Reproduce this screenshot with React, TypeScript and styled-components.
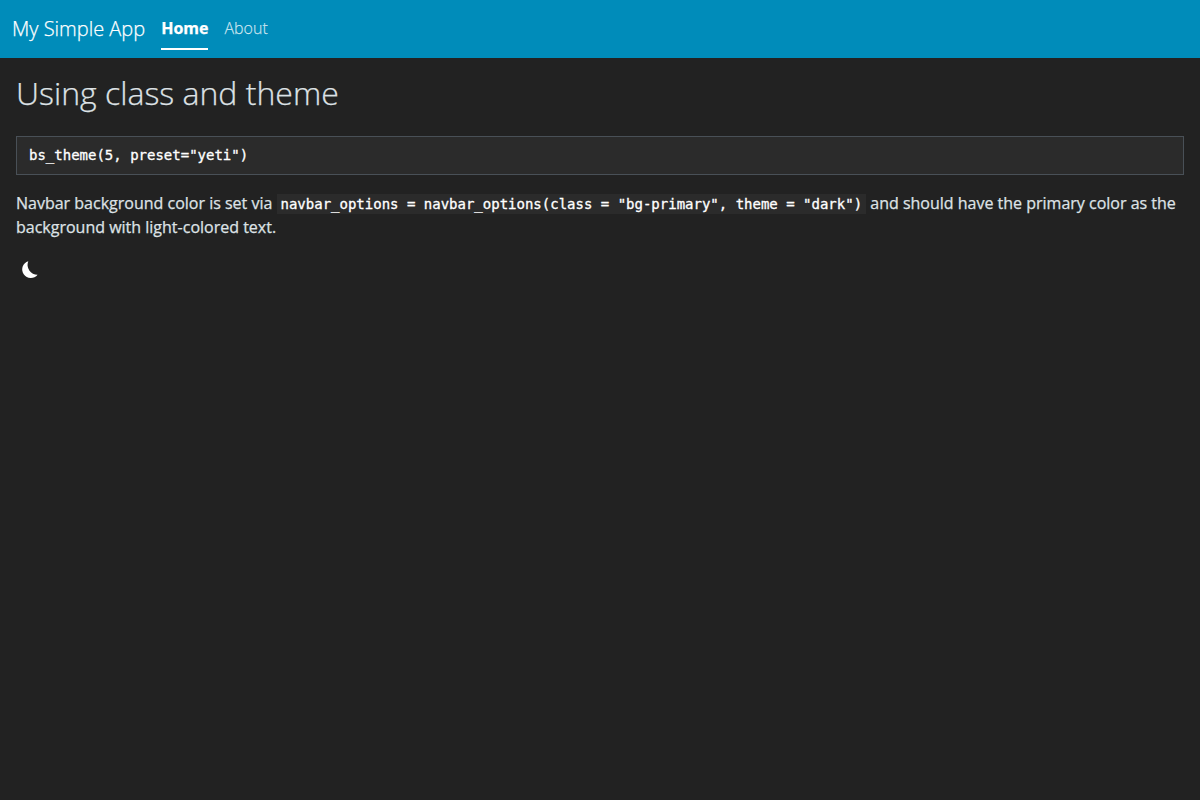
import React from "react";
import styled, { createGlobalStyle } from "styled-components";

const GlobalStyle = createGlobalStyle`
  *, *::before, *::after { box-sizing: border-box; }
  body {
    margin: 0;
    background: #222222;
    color: #dee2e6;
    font-family: "Open Sans", "Liberation Sans", sans-serif;
    font-size: 16px;
    font-weight: 400;
    line-height: 1.5;
    -webkit-text-stroke: 0.25px currentColor;
  }
`;

const Navbar = styled.nav`
  display: flex;
  align-items: center;
  height: 58px;
  padding: 0 12px;
  background: #008cba;
`;

const Brand = styled.a`
  margin-right: 16px;
  font-size: 20px;
  font-weight: 300;
  line-height: 30px;
  color: #ffffff;
  white-space: nowrap;
`;

const NavList = styled.ul`
  display: flex;
  gap: 16px;
  margin: 0;
  padding: 0;
  list-style: none;
`;

const NavLink = styled.a<{ $active?: boolean }>`
  display: block;
  padding: 8px 0;
  border-bottom: 2px solid ${(p) => (p.$active ? "#ffffff" : "transparent")};
  font-weight: ${(p) => (p.$active ? 700 : 300)};
  color: ${(p) => (p.$active ? "#ffffff" : "rgba(255, 255, 255, 0.7)")};
`;

const Page = styled.main`
  display: flex;
  flex-direction: column;
  align-items: stretch;
  gap: 16px;
  padding: 16px;
`;

const Title = styled.h2`
  margin: 0 0 8px;
  font-size: 32px;
  font-weight: 300;
  line-height: 38.4px;
`;

const CodeBlock = styled.pre`
  margin: 0;
  padding: 8px 12px;
  border: 1px solid #495057;
  background: #2b2b2b;
  color: #ffffff;
  font: 400 14px/21px "DejaVu Sans Mono", monospace;
  -webkit-text-stroke: 0.3px currentColor;
`;

const Paragraph = styled.p`
  margin: 0;
`;

const InlineCode = styled.code`
  padding: 2px 4px;
  background: #2b2b2b;
  color: #ffffff;
  font: 400 14px "DejaVu Sans Mono", monospace;
  -webkit-text-stroke: 0.3px currentColor;
`;

const ModeButton = styled.button`
  display: flex;
  width: 24px;
  height: 24px;
  margin: 4px 0 0 2px;
  padding: 0;
  border: 0;
  background: none;
  color: #ffffff;
`;

export default function App() {
  return (
    <>
      <GlobalStyle />
      <Navbar>
        <Brand>My Simple App</Brand>
        <NavList>
          <li><NavLink $active>Home</NavLink></li>
          <li><NavLink>About</NavLink></li>
        </NavList>
      </Navbar>
      <Page>
        <Title>Using class and theme</Title>
        <CodeBlock>bs_theme(5, preset="yeti")</CodeBlock>
        <Paragraph>
          Navbar background color is set via{" "}
          <InlineCode>navbar_options = navbar_options(class = "bg-primary", theme = "dark")</InlineCode>{" "}
          and should have the primary color as the background with light-colored text.
        </Paragraph>
        <ModeButton aria-label="Toggle dark mode">
          <svg width="24" height="24" viewBox="0 0 24 24" fill="currentColor">
            <path d="M10.300 2.200A8.600 8.600 0 1 0 19.600 15.700A9.800 9.800 0 0 1 10.300 2.200z" />
          </svg>
        </ModeButton>
      </Page>
    </>
  );
}
